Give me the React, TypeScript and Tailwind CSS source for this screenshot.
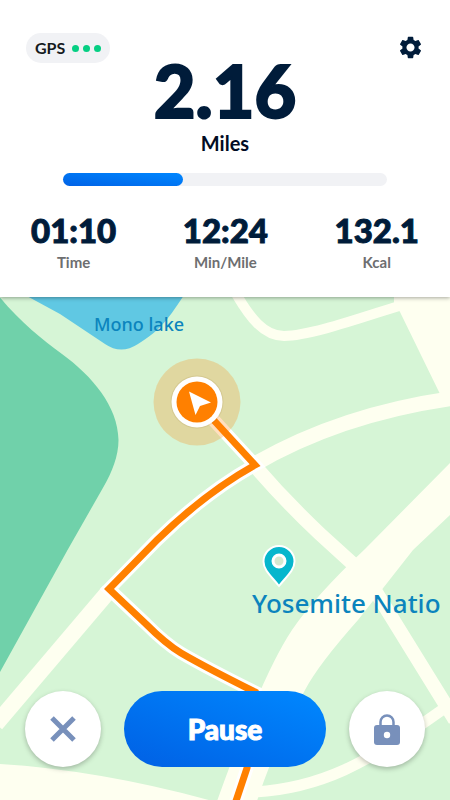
import { MdSettings } from "react-icons/md";

const stats = [
  { value: "01:10", label: "Time" },
  { value: "12:24", label: "Min/Mile" },
  { value: "132.1", label: "Kcal" },
];

const ROUTE =
  "M197 402 L255 465 Q205 493 157 540 L109 589 L146 624 Q166 644 181 653 Q205 667 255 692 L247 768 L235 804";

function TrailMap() {
  return (
    <svg
      className="absolute inset-0 h-full w-full"
      viewBox="0 297 450 503"
      preserveAspectRatio="xMidYMid slice"
      role="img"
      aria-label="Route map"
    >
      <rect x="-450" y="0" width="1350" height="1200" fill="#d6f5d6" />
      <path
        d="M-2 295 C20 322 42 339 62 354 C92 376 118 406 118.500 440 C118.500 456 112 472 104 486 L67 551 L0 672 H-10 V295 Z"
        fill="#70d1aa"
      />
      <path
        d="M25 295 L60 314 L105 344 Q121 355 138 344 C158 332 168 320 184 295 Z"
        fill="#60c8e3"
      />
      <g fill="none" stroke="#fefff0">
        <path d="M235 292 C250 318 264 336 284 336 C310 336 360 318 402 305" strokeWidth="10" />
        <path d="M253 465 Q340 414 455 398" strokeWidth="15" />
        <path d="M254 465 Q285 501 320 534 L352 563 L376 592 L455 720" strokeWidth="14" />
        <path d="M109 591 L-4 724" strokeWidth="16" />
        <path d="M255 792 C320 788 365 765 442 710" strokeWidth="11" />
      </g>
      <g fill="#fefff0">
        <path d="M394 290 V303 L400 312 L440 394 L460 400 V290 Z" />
        <path d="M452 461 L365 549 Q315 596 292 630 Q262 675 216 804 H256 Q275 745 305 690 Q318 665 358 620 L413 550 L452 513 Z" />
        <path d="M-2 764 Q100 770 216 802 H-2 Z" />
      </g>
      <path d={ROUTE} fill="none" stroke="#ffffff" strokeWidth="13" />
      <circle cx="197" cy="402" r="43.500" fill="#ff8000" fillOpacity="0.25" />
      <path d={ROUTE} fill="none" stroke="#ff8000" strokeWidth="7" />
      <circle cx="197" cy="402" r="26.500" fill="#806020" fillOpacity="0.12" />
      <circle cx="197" cy="402" r="25.500" fill="#ffffff" />
      <circle cx="197" cy="402" r="20.500" fill="#ff8000" />
      <path d="M189 391.500 L211 402.500 L200 406 L195.500 415 Z" fill="#ffffff" />
      <path
        d="M279 546 A15.500 15.500 0 0 0 263.500 561.500 C263.500 570 271 576 279 586 C287 576 294.500 570 294.500 561.500 A15.500 15.500 0 0 0 279 546 Z"
        fill="#06b6cd"
        stroke="#ffffff"
        strokeWidth="2"
      />
      <circle cx="279" cy="561" r="6" fill="#d6e8d0" stroke="#ffffff" strokeWidth="3" />
      <g fill="#0b84bd" className="font-['Noto_Sans',sans-serif] font-medium">
        <text x="94" y="331" fontSize="18">Mono lake</text>
        <text x="252" y="613" fontSize="26">Yosemite Natio</text>
      </g>
    </svg>
  );
}

export default function App() {
  return (
    <main className="flex min-h-screen flex-col bg-white font-[Lato,sans-serif] text-[#001c3a]">
      <header className="relative z-10 bg-white pb-[23px] pt-[33px] shadow-[0_1px_4px_rgba(0,0,0,0.35)]">
        <div className="grid grid-cols-[1fr_auto_1fr] items-start px-[26px]">
          <div className="flex h-[30px] items-center gap-[7px] justify-self-start rounded-full bg-[#f1f2f5] px-[9px] text-base font-bold text-[#151a20]">
            GPS
            <span className="flex gap-1">
              <i className="size-[7px] rounded-full bg-[#05cf83]" />
              <i className="size-[7px] rounded-full bg-[#05cf83]" />
              <i className="size-[7px] rounded-full bg-[#05cf83]" />
            </span>
          </div>
          <div className="pt-[22px] text-center">
            <h1 className="text-[72px] font-black leading-[70px] [-webkit-text-stroke:2px_#001c3a]">2.16</h1>
            <p className="text-xl font-bold leading-9 text-[#020c24]">Miles</p>
          </div>
          <button type="button" aria-label="Settings" className="justify-self-end pt-px">
            <MdSettings size={27} />
          </button>
        </div>
        <div
          role="progressbar"
          aria-label="Distance goal"
          aria-valuenow={37}
          aria-valuemin={0}
          aria-valuemax={100}
          className="mx-[63px] mt-3 h-[13px] rounded-full bg-[#f1f2f5]"
        >
          <div className="h-full w-[37%] rounded-full bg-linear-to-tr from-[#0262e6] to-[#0087ff]" />
        </div>
        <dl className="mt-6 flex justify-between px-[31px] text-center">
          {stats.map((s) => (
            <div key={s.label} className="flex flex-col-reverse">
              <dt className="text-[15px] font-bold leading-6 text-[#6d6e70]">{s.label}</dt>
              <dd className="text-[33px] font-black leading-10 [-webkit-text-stroke:1px_#001c3a]">{s.value}</dd>
            </div>
          ))}
        </dl>
      </header>
      <section className="relative flex flex-1 flex-col justify-end overflow-hidden">
        <TrailMap />
        <div className="relative flex gap-[23px] px-[25px] pb-[33px] pt-[394px]">
          <button
            type="button"
            aria-label="Stop"
            className="flex size-[76px] shrink-0 items-center justify-center rounded-full bg-white text-[#7890bb] shadow-[0_2px_5px_rgba(0,0,0,0.25)]"
          >
            <svg width="26" height="26" viewBox="0 0 26 26" stroke="currentColor" strokeWidth="5">
              <path d="M2 2 L24 24 M24 2 L2 24" />
            </svg>
          </button>
          <button
            type="button"
            className="h-[76px] flex-1 rounded-full bg-linear-to-tr from-[#0260e4] to-[#0088ff] text-[28px] font-black text-white [-webkit-text-stroke:1px_white]"
          >
            Pause
          </button>
          <button
            type="button"
            aria-label="Lock"
            className="flex size-[76px] shrink-0 items-center justify-center rounded-full bg-white text-[#7890bb] shadow-[0_2px_5px_rgba(0,0,0,0.25)]"
          >
            <svg width="26" height="31" viewBox="0 0 26 31">
              <path d="M6.500 13 V8 A6.500 6.500 0 0 1 19.500 8 V13" fill="none" stroke="currentColor" strokeWidth="2.500" />
              <rect y="11" width="26" height="20" rx="3" fill="currentColor" />
              <circle cx="13" cy="21" r="3.200" fill="#ffffff" />
            </svg>
          </button>
        </div>
      </section>
    </main>
  );
}
